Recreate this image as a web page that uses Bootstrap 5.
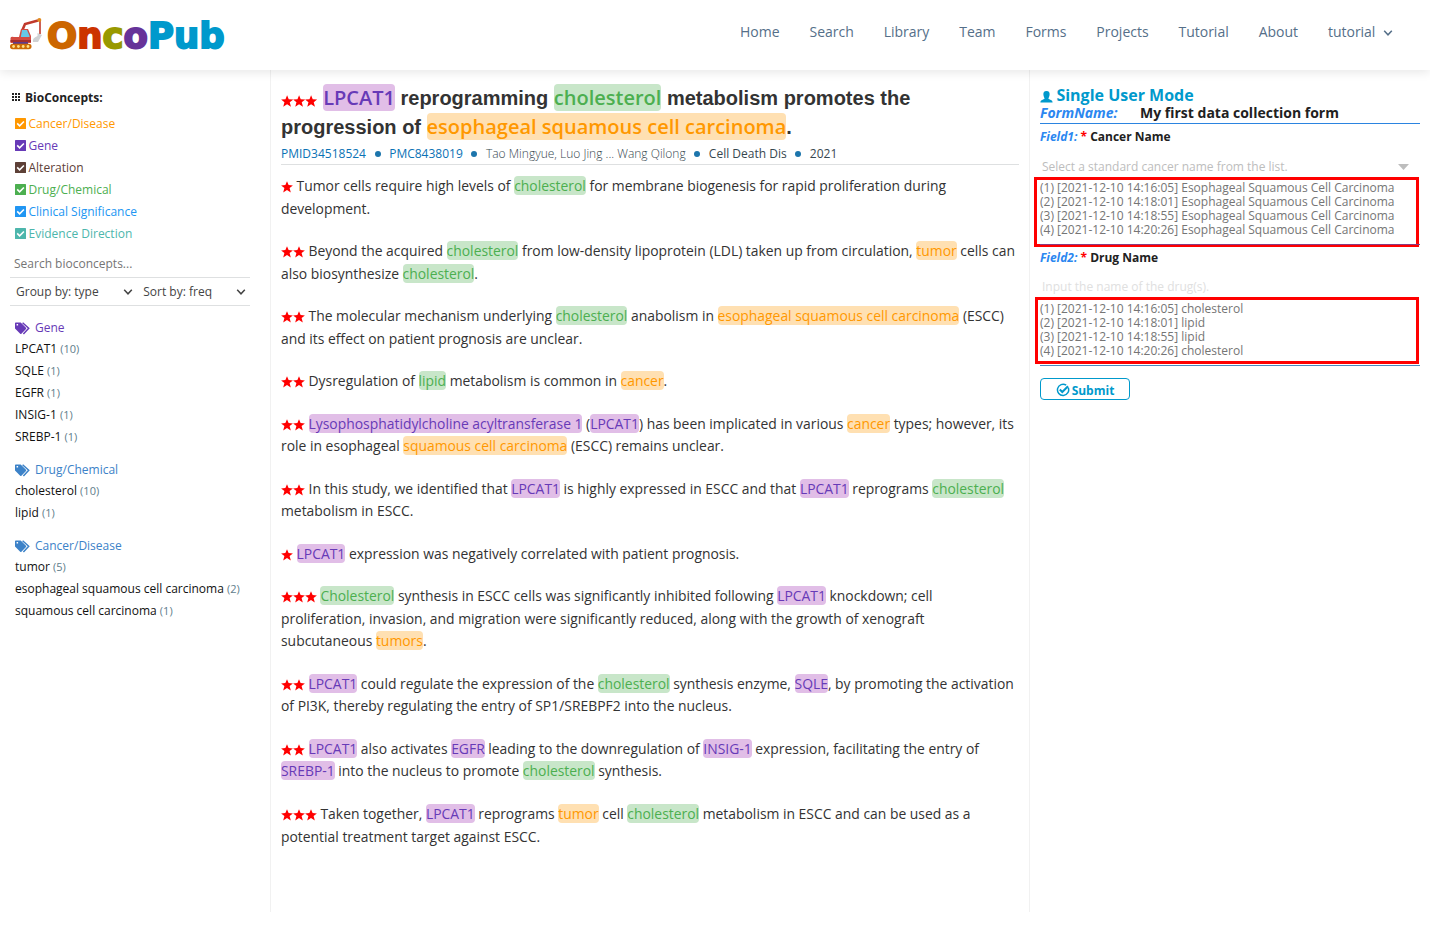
<!DOCTYPE html>
<html lang="en">
<head>
<meta charset="utf-8">
<meta name="viewport" content="width=device-width, initial-scale=1">
<title>OncoPub</title>
<link href="https://cdn.jsdelivr.net/npm/bootstrap@5.3.0/dist/css/bootstrap.min.css" rel="stylesheet">
<style>
body{font-family:"Open Sans",sans-serif;font-size:12px;color:#212121;background:#fff;overflow:hidden}
.topbar{height:70px;box-shadow:0 2px 10px rgba(0,0,0,.1);padding:0 37px 0 10px;position:relative}
.brand-word{font-family:"DejaVu Sans",sans-serif;font-weight:700;font-size:35.5px;line-height:40px;-webkit-text-stroke:1.8px currentColor}
.topbar .nav{gap:30px;padding-top:21px}
.topbar .nav-link{padding:0;font-size:14px;line-height:22px;color:#556f89;letter-spacing:-.02px}
.workspace{height:842px}
.side{width:271px;border-right:1px solid #f1f1f1;padding:17px 20px 0 10px}
.article{width:759px;border-right:1px solid #f1f1f1;padding:14px 10px 0}
.entry{width:400px;padding:14px 10px 0}
.cat{height:22px;line-height:22px;padding-left:5px}
.cat svg{width:11px;height:11px;margin:0 2.5px 1px 0;flex:none}
.rule{border-bottom:1px solid #dee0e1}
.group-head{height:22px;line-height:22px;padding-left:5px;color:#3c82c8}
.group-head svg{width:15px;height:13px;margin-right:5px}
.term{height:22px;line-height:22px;padding-left:5px;color:#111;white-space:nowrap;position:relative}
.group-head + .term{margin-top:-1px}
.term span{font-size:11px;color:#607d8b}
.c-dis{color:#ff9800}.c-gene,.group-head.c-gene{color:#673ab7}.c-alt{color:#5d4037}.c-drug{color:#4caf50}.c-clin{color:#2196f3}.c-evi{color:#4db6ac}
.g,.d,.c{border-radius:4px}
.g{color:#673ab7;background:#e1bee7}.d{color:#4caf50;background:#c8e6c9}.c{color:#ff9800;background:#ffe0b2}
.title{font:bold 20px/28.6px "Liberation Sans",sans-serif;color:#333;margin:0;white-space:nowrap}
.title .g,.title .d,.title .c{font-family:"Open Sans",sans-serif;font-weight:600}
.st{width:12px;height:12px;fill:red;vertical-align:-2px}
.title .st{width:12.2px;height:12.4px}
.sent .st{margin-right:-.05px}
.meta{height:22px;line-height:21px;white-space:nowrap;color:#37474f}
.meta a{color:#0b72b5;text-decoration:none}
.meta i{width:6px;height:6px;border-radius:50%;background:#1c75ac;margin:0 8.6px}
.sent{font-size:13.9px;line-height:22.52px;margin:0 0 20px;color:#333;white-space:nowrap}
.mode{font-size:16px;line-height:18px;height:20px;padding-top:2px;font-weight:700;color:#0099cc}
.fname{height:20px;line-height:17px;font-size:14px;font-weight:700;border-bottom:1px solid #2b84e0}
.lbl{font-style:italic;color:#2b87f0}
.field-label{font-weight:700;line-height:17px}
.ph{font-size:12px;padding:0 11px 0 2px;height:17px;line-height:17px}
.records{border:3px solid #f00;margin:2px 1px 0 -6px;padding:1px 0 0 3px;line-height:14px;color:#757575;position:relative;white-space:nowrap}
.under{position:absolute;left:3px;right:-4px;bottom:-1px;height:1px;background:#8a3a80}
.submit{width:90px;height:22px;border:1px solid #0099cc;border-radius:4px;color:#0099cc;font-weight:700;font-size:12px;padding:3px 0 0;line-height:18px;background:#fff}
</style>
</head>
<body>
<svg class="d-none">
<symbol id="star" viewBox="0 0 12 12"><path d="M6 .2 7.6 4.1 11.9 4.4 8.6 7.1 9.8 11.4 6 9.1 2.2 11.4 3.4 7.1.1 4.4 4.4 4.1Z"/></symbol>
<symbol id="check" viewBox="0 0 11 11"><rect width="11" height="11" rx=".6" fill="currentColor"/><path d="M2.2 5.4 4.6 7.8 8.9 3.5" fill="none" stroke="#fff" stroke-width="1.6"/></symbol>
<symbol id="tags" viewBox="0 0 15 13"><path d="M0 1.2Q0 .4.8.4H5.7L11 5.7Q11.5 6.3 11 7L6.4 11.7Q5.8 12.2 5.2 11.7L0 6.4ZM1.6 2V3.5H3.1V2Z" fill="currentColor" fill-rule="evenodd"/><path d="M7.6.8 13.7 6.3 8.4 11.9" fill="none" stroke="currentColor" stroke-width="1.5"/></symbol>
<symbol id="chev" viewBox="0 0 10 8"><path d="M1.2 1.8 5 5.8 8.8 1.8" fill="none" stroke="currentColor" stroke-width="1.5"/></symbol>
</svg>

<header class="topbar d-flex justify-content-between align-items-start">
  <a class="d-flex text-decoration-none" href="#">
    <svg width="37" height="54" viewBox="0 0 37 54">
      <path d="M12 31 15 24 28 20.5" fill="none" stroke="#c0392b" stroke-width="2.6"/>
      <path d="M30 20V34" stroke="#c0392b" stroke-width="1.6"/><circle cx="29.3" cy="20" r="2" fill="#e08a1e"/>
      <path d="M27.5 33 32 35 28 42H23Q22 38 27.5 36Z" fill="#cfd1d3"/>
      <path d="M0.5 38Q1 36 4 37H9L11 29H18L21 36V43H.5Z" fill="#d44a40"/>
      <path d="M12 30H17L19.5 36V37H10.8Z" fill="#67c8e6"/>
      <path d="M.5 40H21V42H.5Z" fill="#a52d2d"/><path d="M3 42H18V44H3Z" fill="#603b8a"/>
      <rect y="43.8" width="21.5" height="5.5" rx="2.7" fill="#cc6b05"/>
      <g fill="#ffe083"><circle cx="3.6" cy="46.5" r="1.4"/><circle cx="8.4" cy="46.5" r="1.4"/><circle cx="13.2" cy="46.5" r="1.4"/><circle cx="18" cy="46.5" r="1.4"/></g>
    </svg>
    <span class="brand-word d-block mt-3"><span style="color:#c60">O</span><span style="color:#c30">n</span><span style="color:#990">c</span><span style="color:#639">o</span><span style="color:#09c">Pub</span></span>
  </a>
  <nav class="nav flex-nowrap">
    <a class="nav-link" href="#">Home</a><a class="nav-link" href="#">Search</a><a class="nav-link" href="#">Library</a><a class="nav-link" href="#">Team</a><a class="nav-link" href="#">Forms</a><a class="nav-link" href="#">Projects</a><a class="nav-link" href="#">Tutorial</a><a class="nav-link" href="#">About</a>
    <a class="nav-link" href="#">tutorial <svg width="10" height="8" class="ms-1"><use href="#chev"/></svg></a>
  </nav>
</header>

<div class="workspace d-flex">
  <aside class="side flex-shrink-0">
    <div class="d-flex align-items-center fw-bold" style="height:21px;margin-bottom:5px"><svg width="9" height="9" style="margin:0 4px 1px 2px" fill="#222"><path d="M0 0h2v2H0zM3 0h2v2H3zM6 0h2v2H6zM0 3h2v2H0zM3 3h2v2H3zM6 3h2v2H6zM0 6h2v2H0zM3 6h2v2H3zM6 6h2v2H6z"/></svg>BioConcepts:</div>
    <div class="cat c-dis d-flex align-items-center"><svg><use href="#check"/></svg>Cancer/Disease</div>
    <div class="cat c-gene d-flex align-items-center"><svg><use href="#check"/></svg>Gene</div>
    <div class="cat c-alt d-flex align-items-center"><svg><use href="#check"/></svg>Alteration</div>
    <div class="cat c-drug d-flex align-items-center"><svg><use href="#check"/></svg>Drug/Chemical</div>
    <div class="cat c-clin d-flex align-items-center"><svg><use href="#check"/></svg>Clinical Significance</div>
    <div class="cat c-evi d-flex align-items-center"><svg><use href="#check"/></svg>Evidence Direction</div>
    <div class="rule" style="height:33px;padding:10px 0 0 4px;color:#757575">Search bioconcepts...</div>
    <div class="rule d-flex align-items-center" style="height:28px;color:#444;padding:0 4px 0 6px"><span>Group by: type</span><svg width="10" height="8" class="ms-auto"><use href="#chev"/></svg><span style="margin:0 24px 0 10px">Sort by: freq</span><svg width="10" height="8"><use href="#chev"/></svg></div>
    <div class="group-head c-gene d-flex align-items-center" style="margin-top:11px"><svg><use href="#tags"/></svg>Gene</div>
    <div class="term">LPCAT1 <span>(10)</span></div><div class="term">SQLE <span>(1)</span></div><div class="term">EGFR <span>(1)</span></div><div class="term">INSIG-1 <span>(1)</span></div><div class="term">SREBP-1 <span>(1)</span></div>
    <div class="group-head d-flex align-items-center" style="margin-top:11px"><svg><use href="#tags"/></svg>Drug/Chemical</div>
    <div class="term">cholesterol <span>(10)</span></div><div class="term">lipid <span>(1)</span></div>
    <div class="group-head d-flex align-items-center" style="margin-top:11px"><svg><use href="#tags"/></svg>Cancer/Disease</div>
    <div class="term">tumor <span>(5)</span></div><div class="term">esophageal squamous cell carcinoma <span>(2)</span></div><div class="term">squamous cell carcinoma <span>(1)</span></div>
  </aside>

  <main class="article flex-shrink-0">
    <h1 class="title"><svg class="st"><use href="#star"/></svg><svg class="st"><use href="#star"/></svg><svg class="st"><use href="#star"/></svg> <span class="g">LPCAT1</span> reprogramming <span class="d">cholesterol</span> metabolism promotes the<br>progression of <span class="c">esophageal squamous cell carcinoma</span>.</h1>
    <div class="meta rule d-flex align-items-center" style="margin:2px 0 10px"><a href="#">PMID34518524</a><i></i><a href="#">PMC8438019</a><i></i><span class="fw-light">Tao Mingyue, Luo Jing ... Wang Qilong</span><i></i><span>Cell Death Dis</span><i></i><span>2021</span></div>
    <p class="sent"><svg class="st"><use href="#star"/></svg> Tumor cells require high levels of <span class="d">cholesterol</span> for membrane biogenesis for rapid proliferation during<br>development.</p>
    <p class="sent"><svg class="st"><use href="#star"/></svg><svg class="st"><use href="#star"/></svg> Beyond the acquired <span class="d">cholesterol</span> from low-density lipoprotein (LDL) taken up from circulation, <span class="c">tumor</span> cells can<br>also biosynthesize <span class="d">cholesterol</span>.</p>
    <p class="sent"><svg class="st"><use href="#star"/></svg><svg class="st"><use href="#star"/></svg> The molecular mechanism underlying <span class="d">cholesterol</span> anabolism in <span class="c">esophageal squamous cell carcinoma</span> (ESCC)<br>and its effect on patient prognosis are unclear.</p>
    <p class="sent"><svg class="st"><use href="#star"/></svg><svg class="st"><use href="#star"/></svg> Dysregulation of <span class="d">lipid</span> metabolism is common in <span class="c">cancer</span>.</p>
    <p class="sent"><svg class="st"><use href="#star"/></svg><svg class="st"><use href="#star"/></svg> <span class="g">Lysophosphatidylcholine acyltransferase 1</span> (<span class="g">LPCAT1</span>) has been implicated in various <span class="c">cancer</span> types; however, its<br>role in esophageal <span class="c">squamous cell carcinoma</span> (ESCC) remains unclear.</p>
    <p class="sent"><svg class="st"><use href="#star"/></svg><svg class="st"><use href="#star"/></svg> In this study, we identified that <span class="g">LPCAT1</span> is highly expressed in ESCC and that <span class="g">LPCAT1</span> reprograms <span class="d">cholesterol</span><br>metabolism in ESCC.</p>
    <p class="sent"><svg class="st"><use href="#star"/></svg> <span class="g">LPCAT1</span> expression was negatively correlated with patient prognosis.</p>
    <p class="sent"><svg class="st"><use href="#star"/></svg><svg class="st"><use href="#star"/></svg><svg class="st"><use href="#star"/></svg> <span class="d">Cholesterol</span> synthesis in ESCC cells was significantly inhibited following <span class="g">LPCAT1</span> knockdown; cell<br>proliferation, invasion, and migration were significantly reduced, along with the growth of xenograft<br>subcutaneous <span class="c">tumors</span>.</p>
    <p class="sent"><svg class="st"><use href="#star"/></svg><svg class="st"><use href="#star"/></svg> <span class="g">LPCAT1</span> could regulate the expression of the <span class="d">cholesterol</span> synthesis enzyme, <span class="g">SQLE</span>, by promoting the activation<br>of PI3K, thereby regulating the entry of SP1/SREBPF2 into the nucleus.</p>
    <p class="sent"><svg class="st"><use href="#star"/></svg><svg class="st"><use href="#star"/></svg> <span class="g">LPCAT1</span> also activates <span class="g">EGFR</span> leading to the downregulation of <span class="g">INSIG-1</span> expression, facilitating the entry of<br><span class="g">SREBP-1</span> into the nucleus to promote <span class="d">cholesterol</span> synthesis.</p>
    <p class="sent"><svg class="st"><use href="#star"/></svg><svg class="st"><use href="#star"/></svg><svg class="st"><use href="#star"/></svg> Taken together, <span class="g">LPCAT1</span> reprograms <span class="c">tumor</span> cell <span class="d">cholesterol</span> metabolism in ESCC and can be used as a<br>potential treatment target against ESCC.</p>
  </main>

  <section class="entry flex-shrink-0">
    <div class="mode d-flex align-items-center"><svg width="13" height="12" style="margin:3px 3.4px 0 0" fill="#0099cc"><path d="M6.5 0C9 0 9.8 1.7 9.6 3.8 9.4 5.7 8.6 6.8 8.4 7.8 9 8.7 12.6 8.7 12.6 11.5H.4C.4 8.7 4 8.7 4.6 7.8 4.4 6.8 3.6 5.7 3.4 3.8 3.2 1.7 4 0 6.5 0Z"/></svg>Single User Mode</div>
    <div class="fname d-flex"><span class="lbl" style="width:100px">FormName:</span><span>My first data collection form</span></div>
    <div class="field-label mt-1"><span class="lbl">Field1:</span> <span style="color:red">*</span> Cancer Name</div>
    <div class="ph d-flex align-items-center" style="margin-top:13px;color:#bdbdbd"><span class="me-auto">Select a standard cancer name from the list.</span><svg width="11" height="6" fill="#bdbdbd"><path d="M0 0H11L5.5 6Z"/></svg></div>
    <div class="records" style="height:70px">(1) [2021-12-10 14:16:05] Esophageal Squamous Cell Carcinoma<br>(2) [2021-12-10 14:18:01] Esophageal Squamous Cell Carcinoma<br>(3) [2021-12-10 14:18:55] Esophageal Squamous Cell Carcinoma<br>(4) [2021-12-10 14:20:26] Esophageal Squamous Cell Carcinoma<div class="under"></div></div>
    <div class="field-label" style="margin-top:2px"><span class="lbl">Field2:</span> <span style="color:red">*</span> Drug Name</div>
    <div class="ph" style="margin-top:12px;color:#e0e0e0">Input the name of the drug(s).</div>
    <div class="records" style="height:67px;margin-left:-5px;padding:2px 0 0 2px">(1) [2021-12-10 14:16:05] cholesterol<br>(2) [2021-12-10 14:18:01] lipid<br>(3) [2021-12-10 14:18:55] lipid<br>(4) [2021-12-10 14:20:26] cholesterol</div>
    <div style="height:1px;margin-top:1px;background:#4a88bd"></div>
    <button class="submit d-flex align-items-center justify-content-center" style="margin-top:12px"><svg width="14" height="14" viewBox="0 0 14 14" style="margin:0 2px 2px 0" fill="none" stroke="#0099cc"><path d="M12.2 4.6A5.6 5.6 0 1 1 10.2 2.2" stroke-width="1.5"/><path d="M3.8 6.5 6.3 9 12 3.3" stroke-width="2"/></svg>Submit</button>
  </section>
</div>
<script src="https://cdn.jsdelivr.net/npm/bootstrap@5.3.0/dist/js/bootstrap.bundle.min.js"></script>
</body>
</html>
